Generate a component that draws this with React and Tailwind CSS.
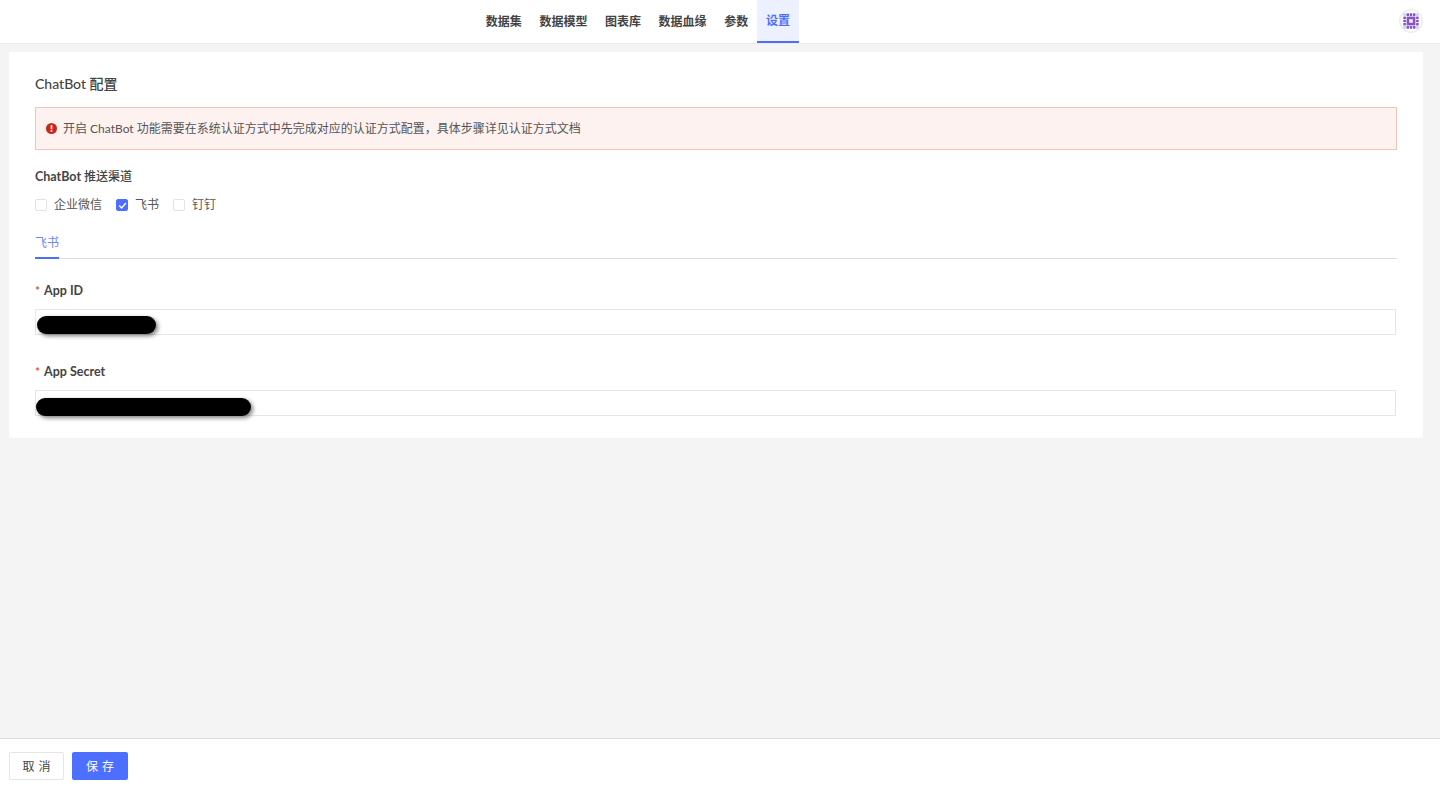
const font = { fontFamily: 'Lato, "Noto Sans CJK SC", sans-serif' };
const tabs = ["数据集", "数据模型", "图表库", "数据血缘", "参数"];

function Logo() {
  const dots = [];
  for (let y = 0; y < 5; y++) {
    for (let x = 0; x < 5; x++) {
      const corner = (x === 0 || x === 4) && (y === 0 || y === 4);
      const center = x > 0 && x < 4 && y > 0 && y < 4;
      if (!center) dots.push(<rect key={x + "-" + y} x={4.3 + x * 3.2} y={4.3 + y * 3.2} width="2.6" height="2.6" rx="0.6" fill={corner ? "#d9c8ee" : "#8355c4"} />);
    }
  }
  return (
    <svg width="24" height="24" viewBox="0 0 24 24">
      <circle cx="12" cy="12" r="11.2" fill="#fff" stroke="#ececec" strokeWidth="1.4" />
      {dots}
      <rect x="7.6" y="7.6" width="8.8" height="8.8" fill="#8355c4" />
      <rect x="10.2" y="10.2" width="3.6" height="3.6" fill="#f3eefa" />
    </svg>
  );
}

function Check({ label, checked }) {
  return (
    <label className="flex items-center">
      <span className={`flex h-[12px] w-[12px] items-center justify-center rounded-[2px] border ${checked ? "border-[#4c6fff] bg-[#4c6fff]" : "border-[#e3e3e3] bg-white"}`}>
        {checked && <svg width="9" height="9" viewBox="0 0 9 9"><path d="M1.2 4.6 3.6 7 7.9 2" fill="none" stroke="#fff" strokeWidth="1.4" /></svg>}
      </span>
      <span className="ml-[7px] text-[12px] leading-[18px] text-[#555]">{label}</span>
    </label>
  );
}

function Field({ label, blob, className }) {
  return (
    <div className={className}>
      <div className="flex h-[18px] items-center text-[12.5px] font-bold text-[#444]">
        <span className="mr-[5px] w-[4px] text-[12px] text-[#e2552f]">*</span>{label}
      </div>
      <div className="relative mt-[9px] h-[26px] w-[1361px] border border-[#e6e6e6] bg-white">
        <div className={`absolute rounded-full bg-black shadow-[2px_2px_4px_rgba(0,0,0,0.5)] ${blob}`} />
      </div>
    </div>
  );
}

export default function App() {
  return (
    <div style={font} className="flex h-[789px] flex-col overflow-hidden bg-[#f4f4f4]">
      <header className="relative flex h-[44px] shrink-0 justify-center border-b border-[#ebebeb] bg-white pr-[164px]">
        <nav className="flex">
          {tabs.map((t) => (
            <div key={t} className="flex h-[43px] items-center px-[8.8px] text-[12px] font-semibold text-[#444]">{t}</div>
          ))}
          <div className="flex h-[43px] items-center border-b-2 border-[#4c6fff] bg-[#edf0ff] px-[9px] text-[12px] font-semibold text-[#4c6fff]">设置</div>
        </nav>
        <div className="absolute right-[17px] top-[9px]"><Logo /></div>
      </header>
      <main className="flex-1 px-[9px] pt-[8px]">
        <section className="h-[386px] w-[1414px] rounded-[2px] bg-white px-[26px] pt-[22px]">
          <h1 className="text-[14px] font-medium leading-[20px] text-[#444]">ChatBot 配置</h1>
          <div className="mt-[13px] flex h-[43px] w-[1362px] items-center border border-[#f0c4b8] bg-[#fdf2f0] pl-[10px] text-[12px] text-[#555]">
            <svg width="11" height="11" viewBox="0 0 12 12" className="mr-[6px]">
              <circle cx="6" cy="6" r="6" fill="#c9281c" />
              <rect x="5.1" y="2.4" width="1.8" height="4.4" fill="#fff" />
              <rect x="5.1" y="7.8" width="1.8" height="1.8" fill="#fff" />
            </svg>
            开启 ChatBot 功能需要在系统认证方式中先完成对应的认证方式配置，具体步骤详见认证方式文档
          </div>
          <div className="mt-[18px] text-[12px] font-medium leading-[18px] text-[#444]"><span className="text-[12.5px] font-bold">ChatBot</span> 推送渠道</div>
          <div className="mt-[10px] flex gap-[14px]">
            <Check label="企业微信" />
            <Check label="飞书" checked />
            <Check label="钉钉" />
          </div>
          <div className="mt-[16px] h-[29px] w-[1362px] border-b border-[#ddd]">
            <div className="h-[29px] w-[24px] border-b-2 border-[#4c6fff] pt-[4px] text-[12px] leading-[18px] text-[#6d87ff]">飞书</div>
          </div>
          <Field className="mt-[23px]" label="App ID" blob="left-[1px] top-[6px] h-[18px] w-[119px]" />
          <Field className="mt-[28px]" label="App Secret" blob="left-0 top-[7px] h-[18px] w-[215px]" />
        </section>
      </main>
      <footer className="flex h-[51px] shrink-0 items-start gap-[8px] border-t border-[#dcdcdc] bg-white pl-[9px] pt-[13px]">
        <button className="h-[28px] w-[55px] rounded-[2px] border border-[#e6e6e6] bg-white pl-[4px] pt-[1px] text-[12px] tracking-[4px] text-[#444]">取消</button>
        <button className="h-[28px] w-[56px] rounded-[2px] bg-[#4c6fff] pl-[4px] pt-[1px] text-[12px] tracking-[4px] text-white">保存</button>
      </footer>
    </div>
  );
}
